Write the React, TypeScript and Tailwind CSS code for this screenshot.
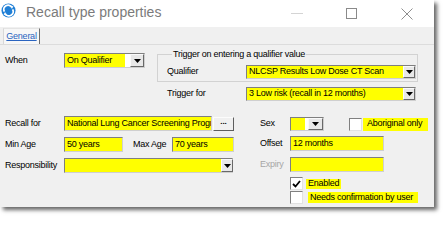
import React from 'react'

const font = "font-['Liberation_Sans',Arial,sans-serif]"

function Arrow() {
  return (
    <svg width="7" height="4" viewBox="0 0 7 4">
      <path d="M0 0h7L3.5 4z" fill="#000" />
    </svg>
  )
}

// sunken yellow text box
function Field({ className, children }: { className: string; children?: React.ReactNode }) {
  return (
    <div
      className={`h-[15px] flex-none flex items-center overflow-hidden whitespace-nowrap bg-[#ffff00] border border-t-[#7f7f7f] border-l-[#7f7f7f] border-b-[#cfcfcf] border-r-[#cfcfcf] pl-[2px] ${className}`}
    >
      {children}
    </div>
  )
}

// combo box: yellow selection, white remainder, drop button
function Combo({
  className,
  fill,
  button,
  children,
}: {
  className: string
  fill: string
  button: string
  children?: React.ReactNode
}) {
  return (
    <div
      className={`flex-none flex bg-white border border-t-[#7f7f7f] border-l-[#7f7f7f] border-b-[#cfcfcf] border-r-[#cfcfcf] ${className}`}
    >
      <div className={`flex-none flex items-center overflow-hidden whitespace-nowrap bg-[#ffff00] pl-[2px] ${fill}`}>
        {children}
      </div>
      <div className="flex-1" />
      <div
        className={`flex-none flex items-center justify-center bg-[#e8e8e8] border border-t-[#fafafa] border-l-[#fafafa] border-b-[#696969] border-r-[#696969] ${button}`}
      >
        <Arrow />
      </div>
    </div>
  )
}

function Check({ checked }: { checked?: boolean }) {
  return (
    <div className="flex-none w-[13px] h-[13px] bg-white border border-t-[#808080] border-l-[#808080] border-b-[#e2e2e2] border-r-[#e2e2e2] flex items-center justify-center">
      {checked && (
        <svg width="9" height="8" viewBox="0 0 9 8">
          <path d="M1 4l2.5 2.5L8 1" stroke="#000" strokeWidth="1.8" fill="none" />
        </svg>
      )}
    </div>
  )
}

function AppIcon() {
  return (
    <svg width="15" height="15" viewBox="0 0 16 16">
      <circle cx="8" cy="8" r="7.5" fill="#1f7fd6" />
      <path d="M3.6 9.2A4.6 4.6 0 0 1 11.6 4.6" stroke="#fff" strokeWidth="2" fill="none" />
      <path d="M12.4 6.8A4.6 4.6 0 0 1 4.4 11.4" stroke="#fff" strokeWidth="2" fill="none" />
      <path d="M10 2.6l3.2 1.2-1.6 2.6z" fill="#fff" />
      <path d="M6 13.4l-3.2-1.2 1.6-2.6z" fill="#fff" />
    </svg>
  )
}

export default function App() {
  return (
    <div className={`w-[447px] h-[220px] bg-white overflow-hidden ${font}`}>
      <div className="w-[434px] h-[207px] bg-[#f0f0f0] flex flex-col shadow-[3px_3px_4px_rgba(0,0,0,0.6)] text-[9px] tracking-[-0.25px] text-black">
        {/* title bar */}
        <div className="h-[27px] flex-none bg-white flex items-start">
          <div className="ml-[1px] mt-[3px]">
            <AppIcon />
          </div>
          <div className="ml-[10px] mt-[4px] text-[14px] leading-[17px] tracking-normal text-[#7b7b7b]">
            Recall type properties
          </div>
          <div className="ml-auto flex h-[27px]">
            <div className="w-[55px] flex items-center justify-center">
              <div className="w-[12px] h-px bg-[#d4d4d4]" />
            </div>
            <div className="w-[55px] flex items-center justify-center">
              <div className="w-[11px] h-[11px] border border-[#8a8a8a]" />
            </div>
            <div className="w-[55px] flex items-center justify-center">
              <svg width="12" height="12" viewBox="0 0 12 12">
                <path d="M0.5 0.5l11 11M11.5 0.5l-11 11" stroke="#8e8e8e" strokeWidth="1" />
              </svg>
            </div>
          </div>
        </div>

        {/* tab strip */}
        <div className="h-[17px] flex-none flex items-end">
          <div className="ml-[3px] w-[37px] h-[16px] bg-[#f7f7f7] border-l border-t border-r border-l-[#d8d8d8] border-t-[#e4e4e4] border-r-[#6e6e6e] flex items-center justify-center">
            <span className="text-[#2a64c0] underline underline-offset-[1px]">General</span>
          </div>
        </div>

        {/* tab page */}
        <div className="flex-1 border-t border-[#dcdcdc] flex flex-col">
          {/* trigger section */}
          <div className="flex items-start">
            <div className="w-[157px] flex-none pt-[8px] pl-[5px] flex items-center">
              <div className="w-[59px]">When</div>
              <Combo className="w-[81px] h-[15px]" fill="w-[60px]" button="w-[14px]">
                On Qualifier
              </Combo>
            </div>
            <div className="flex flex-col">
              <fieldset className="mt-[4px] w-[261px] border border-[#d2d2d2] pl-[9px] pb-[2px]">
                <legend className="ml-[5px] px-[1px] leading-[11px]">Trigger on entering a qualifier value</legend>
                <div className="mt-[5px] flex items-center">
                  <div className="w-[79px]">Qualifier</div>
                  <Combo className="w-[170px] h-[14px]" fill="w-[156px]" button="w-[12px]">
                    NLCSP Results Low Dose CT Scan
                  </Combo>
                </div>
              </fieldset>
              <div className="mt-[5px] pl-[10px] flex items-center">
                <div className="w-[79px]">Trigger for</div>
                <Combo className="w-[170px] h-[14px]" fill="w-[156px]" button="w-[12px]">
                  3 Low risk (recall in 12 months)
                </Combo>
              </div>
            </div>
          </div>

          {/* recall section */}
          <div className="mt-[15px] flex items-start">
            <div className="w-[260px] flex-none pl-[5px] flex flex-col gap-[6px]">
              <div className="flex items-center">
                <div className="w-[59px]">Recall for</div>
                <Field className="w-[148px]">National Lung Cancer Screening Progr</Field>
                <div className="ml-[1px] w-[21px] h-[14px] flex-none bg-[#f0f0f0] border border-t-[#fcfcfc] border-l-[#fcfcfc] border-b-[#5e5e5e] border-r-[#5e5e5e] flex items-center justify-center text-[8px] leading-none tracking-normal font-bold pb-[3px]">
                  ...
                </div>
              </div>
              <div className="flex items-center">
                <div className="w-[59px]">Min Age</div>
                <Field className="w-[59px]">50 years</Field>
                <div className="ml-[10px] w-[39px]">Max Age</div>
                <Field className="w-[62px]">70 years</Field>
              </div>
              <div className="flex items-center">
                <div className="w-[59px]">Responsibility</div>
                <Combo className="w-[169px] h-[15px]" fill="w-[156px]" button="w-[12px]" />
              </div>
            </div>

            <div className="flex flex-col">
              <div className="mt-[1px] flex items-center">
                <div className="w-[30px]">Sex</div>
                <Combo className="w-[34px] h-[14px]" fill="w-[14px]" button="w-[15px]" />
                <div className="ml-[25px]">
                  <Check />
                </div>
                <div className="ml-[1px] w-[65px] h-[13px] bg-[#ffff00] pl-[4px] flex items-center">Aboriginal only</div>
              </div>
              <div className="mt-[5px] flex items-center">
                <div className="w-[30px]">Offset</div>
                <Field className="w-[94px]">12 months</Field>
              </div>
              <div className="mt-[6px] flex items-center">
                <div className="w-[30px] text-[#a6a6a6]">Expiry</div>
                <Field className="w-[94px]" />
              </div>
              <div className="mt-[5px] pl-[30px] flex items-center">
                <Check checked />
                <div className="ml-[3px] h-[10px] bg-[#ffff00] pl-[2px] pr-[2px] flex items-center">Enabled</div>
              </div>
              <div className="mt-[1px] pl-[30px] flex items-center">
                <Check />
                <div className="ml-[5px] w-[110px] h-[11px] bg-[#ffff00] pl-[2px] flex items-center">
                  Needs confirmation by user
                </div>
              </div>
            </div>
          </div>
        </div>
      </div>
    </div>
  )
}
